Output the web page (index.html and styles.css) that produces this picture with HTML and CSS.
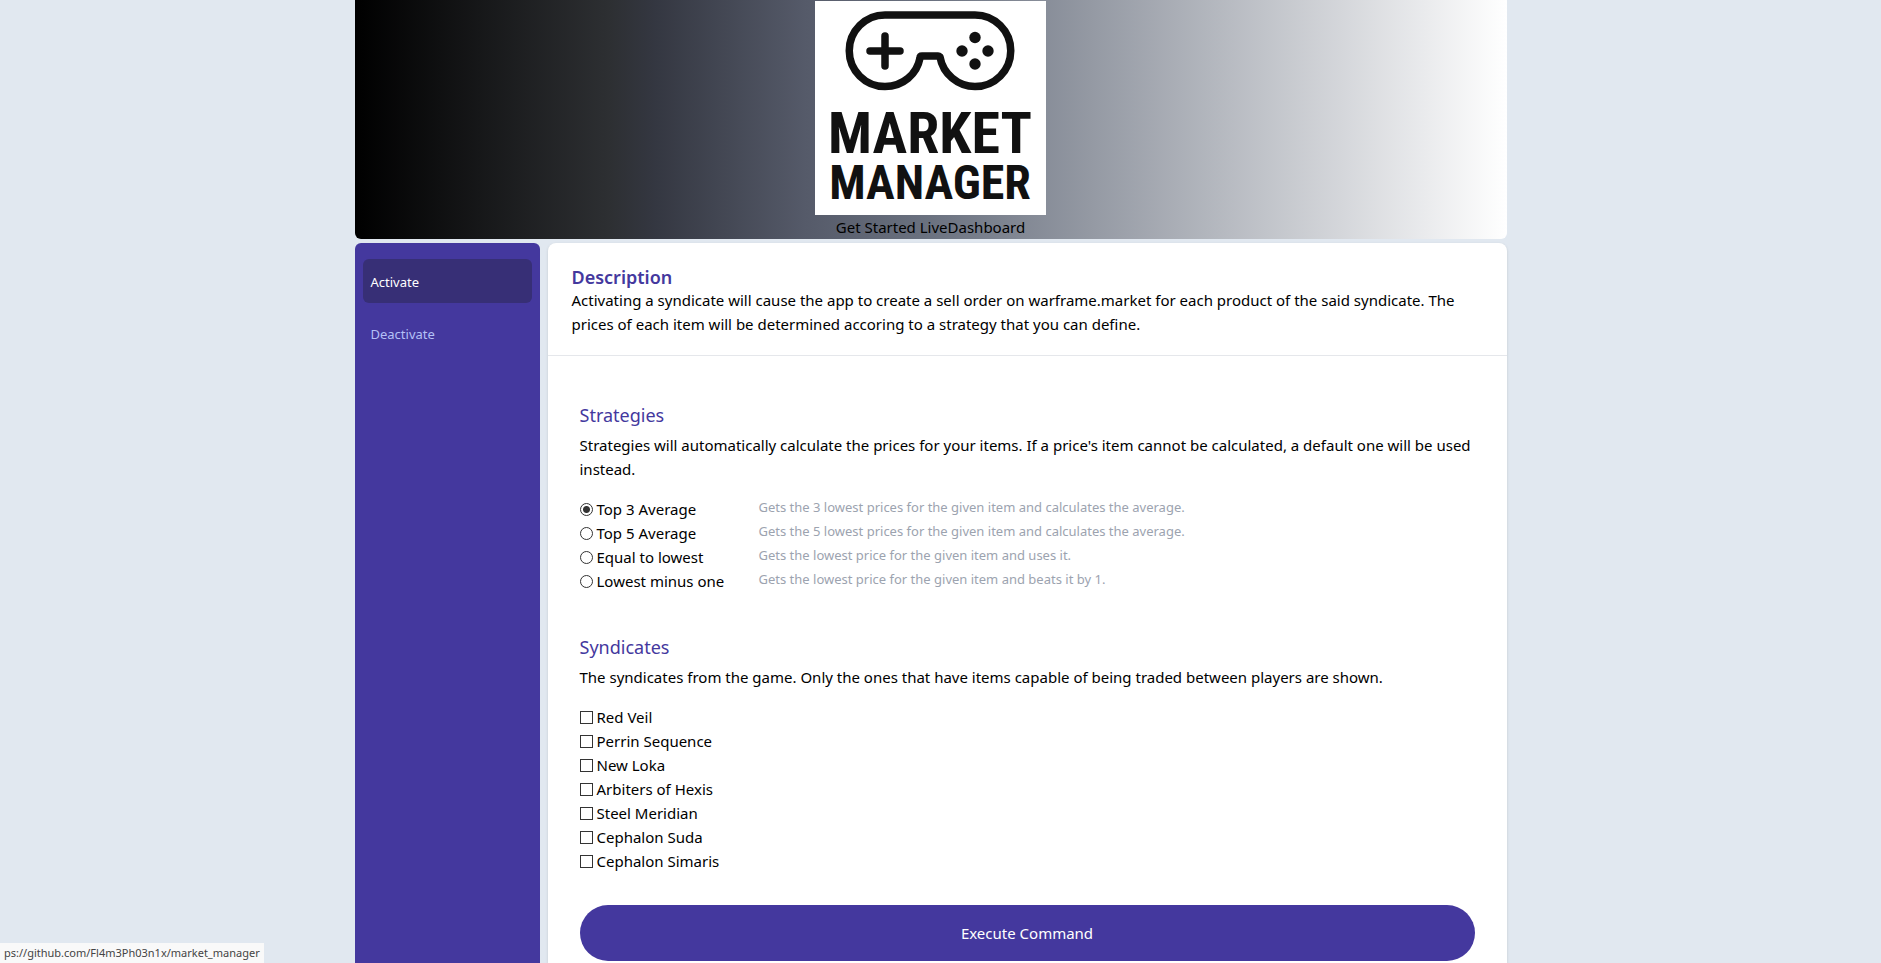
FILE: index.html
```html
<!DOCTYPE html>
<html lang="en">
<head>
<meta charset="utf-8">
<title>Market Manager</title>
<link rel="stylesheet" href="styles.css">
</head>
<body>
<div class="page">
  <header class="banner">
    <svg class="logo" viewBox="0 0 231 214" role="img" aria-label="Market Manager">
      <rect width="231" height="214" fill="#fff"/>
      <g fill="none" stroke="#111" stroke-width="7.500" stroke-linejoin="round" stroke-linecap="round">
        <path d="M70 14H160A35.500 35.500 0 0 1 160 85.500C143 85.500 128 73 125 56Q124 55 123 55H107Q105 55 105 57C102 73 88 85.500 70 85.500A35.500 35.500 0 0 1 70 14Z"/>
        <path d="M70 35V65M55 50H85"/>
      </g>
      <g fill="#111">
        <circle cx="160" cy="36.500" r="5.700"/><circle cx="147" cy="50" r="5.700"/>
        <circle cx="173" cy="50" r="5.700"/><circle cx="160" cy="63" r="5.700"/>
      </g>
      <text class="logo-top" x="115" y="152" text-anchor="middle">MARKET</text>
      <text class="logo-bottom" x="115" y="198" text-anchor="middle">MANAGER</text>
    </svg>
    <nav class="links"><a href="#start">Get Started</a> <a href="#dashboard">LiveDashboard</a></nav>
  </header>
  <div class="columns">
    <nav class="sidebar">
      <a class="tab tab-active" href="#activate">Activate</a>
      <a class="tab" href="#deactivate">Deactivate</a>
    </nav>
    <main class="card">
      <section class="intro">
        <h1>Description</h1>
        <p>Activating a syndicate will cause the app to create a sell order on warframe.market for each product of the said syndicate. The prices of each item will be determined accoring to a strategy that you can define.</p>
      </section>
      <form class="form">
        <section class="group">
          <h2>Strategies</h2>
          <p>Strategies will automatically calculate the prices for your items. If a price's item cannot be calculated, a default one will be used instead.</p>
          <div class="strategies">
            <label class="option"><input type="radio" name="strategy" checked>Top 3 Average</label>
            <span class="hint">Gets the 3 lowest prices for the given item and calculates the average.</span>
            <label class="option"><input type="radio" name="strategy">Top 5 Average</label>
            <span class="hint">Gets the 5 lowest prices for the given item and calculates the average.</span>
            <label class="option"><input type="radio" name="strategy">Equal to lowest</label>
            <span class="hint">Gets the lowest price for the given item and uses it.</span>
            <label class="option"><input type="radio" name="strategy">Lowest minus one</label>
            <span class="hint">Gets the lowest price for the given item and beats it by 1.</span>
          </div>
        </section>
        <section class="group">
          <h2>Syndicates</h2>
          <p>The syndicates from the game. Only the ones that have items capable of being traded between players are shown.</p>
          <div class="syndicates">
            <label class="option"><input type="checkbox">Red Veil</label>
            <label class="option"><input type="checkbox">Perrin Sequence</label>
            <label class="option"><input type="checkbox">New Loka</label>
            <label class="option"><input type="checkbox">Arbiters of Hexis</label>
            <label class="option"><input type="checkbox">Steel Meridian</label>
            <label class="option"><input type="checkbox">Cephalon Suda</label>
            <label class="option"><input type="checkbox">Cephalon Simaris</label>
          </div>
        </section>
        <button class="execute" type="button">Execute Command</button>
      </form>
    </main>
  </div>
</div>
<div class="status">ps://github.com/Fl4m3Ph03n1x/market_manager</div>
</body>
</html>
```
FILE: styles.css
```css
* { box-sizing: border-box; }
html { background: #e1e8f0; }
body {
  margin: 0;
  padding-right: 20px;
  height: 100vh;
  overflow: hidden;
  font-family: "Noto Sans", "Open Sans", sans-serif;
  font-size: 15px;
  line-height: 24px;
  color: #000;
}
h1, h2, p { margin: 0; }
a { color: inherit; text-decoration: none; }
.page {
  max-width: 1152px;
  min-height: 100%;
  margin: 0 auto;
  display: flex;
  flex-direction: column;
  gap: 4px;
}
.banner {
  display: flex;
  flex-direction: column;
  align-items: center;
  padding-top: 1px;
  border-radius: 0 0 6px 6px;
  background: linear-gradient(to right, #000, #2d2f32 22%, #343741 26%, #555a69 39%, #6b7280 50%, #fff);
}
.logo { display: block; width: 231px; }
.logo text { font-family: "Liberation Sans Narrow", "Roboto Condensed", "Open Sans Condensed", Roboto, sans-serif; font-weight: 700; fill: #111; }
.logo-top { font-size: 58px; }
.logo-bottom { font-size: 48px; }
.columns { flex: 1; display: flex; gap: 8px; }
.sidebar {
  width: 185px;
  padding: 16px 8px;
  display: flex;
  flex-direction: column;
  gap: 8px;
  border-radius: 6px 6px 0 0;
  background: #44389e;
}
.tab { padding: 11px 8px 9px; border-radius: 6px; font-size: 13px; color: #b4c0f7; }
.tab-active { background: #372f76; color: #fff; }
.card { flex: 1; border-radius: 8px 8px 0 0; background: #fff; box-shadow: 0 1px 3px #0002; }
.intro { padding: 24px 24px 19px; border-bottom: 1px solid #e5e7eb; }
h1, h2 { color: #44389e; }
h1 { font-size: 18px; font-weight: 600; line-height: 21px; }
h2 { margin-bottom: 4px; font-size: 18px; font-weight: 400; line-height: 28px; }
.form { padding: 45px 32px 0; }
.group { margin-bottom: 32px; }
.group + .group { padding-top: 8px; }
.strategies, .syndicates { padding-top: 16px; display: grid; }
.strategies { grid-template-columns: 20% 1fr; }
.option { display: flex; align-items: center; gap: 4px; }
.option input {
  appearance: none;
  width: 13px;
  height: 13px;
  margin: 0;
  border: 1px solid #333;
  background: #fff;
}
.option input[type="radio"] { border-radius: 50%; }
.option input:checked { background: radial-gradient(circle, #333 3px, #fff 4px); }
.hint { font-size: 13px; line-height: 20px; color: #9ca3af; }
.execute {
  width: 100%;
  height: 56px;
  border: 0;
  border-radius: 28px;
  background: #44389e;
  color: #fff;
  font: inherit;
}
.status {
  position: absolute;
  left: 0;
  bottom: 0;
  padding: 0 4px;
  background: #f9f9f9;
  color: #444;
  font-size: 11px;
  line-height: 20px;
}
```
